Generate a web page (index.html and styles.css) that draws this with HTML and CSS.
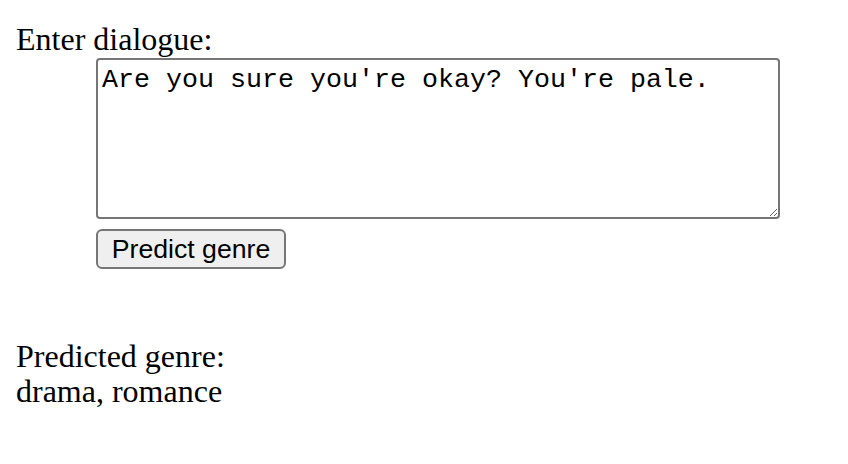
FILE: index.html
```html
<!DOCTYPE html>
<html>
<head>
<meta charset="utf-8">
<link rel="stylesheet" href="styles.css">
</head>
<body>
<div class="label">Enter dialogue:</div>
<div class="form">
<textarea class="dialogue">Are you sure you're okay? You're pale.</textarea>
<button class="predict">Predict genre</button>
</div>
<div class="result">Predicted genre:<br>drama, romance</div>
</body>
</html>
```

FILE: styles.css
```css
html, body {
  background: #ffffff;
}
body {
  margin: 0;
  padding: 22px 16px 16px 16px;
  font-family: "Liberation Serif", "Times New Roman", serif;
  font-size: 32px;
  line-height: 35px;
  color: #000;
}
.label {
  margin: 0;
}
.form {
  margin: 1px 0 0 80px;
  display: flex;
  flex-direction: column;
  align-items: flex-start;
  gap: 10px;
}
.dialogue {
  box-sizing: border-box;
  width: 684px;
  height: 161px;
  margin: 0;
  padding: 5px 4px 4px 4px;
  border: 2px solid #767676;
  border-radius: 4px;
  font-family: "Liberation Mono", "Courier New", monospace;
  font-size: 26.67px;
  line-height: 30px;
  color: #000;
  background: #fff;
  resize: both;
}
.predict {
  box-sizing: border-box;
  width: 190px;
  height: 40px;
  margin: 0;
  padding: 0 12px;
  border: 2px solid #767676;
  border-radius: 6px;
  background: #efefef;
  font-family: "Liberation Sans", Arial, sans-serif;
  font-size: 26.67px;
  color: #000;
}
.result {
  margin-top: 70px;
}
```
